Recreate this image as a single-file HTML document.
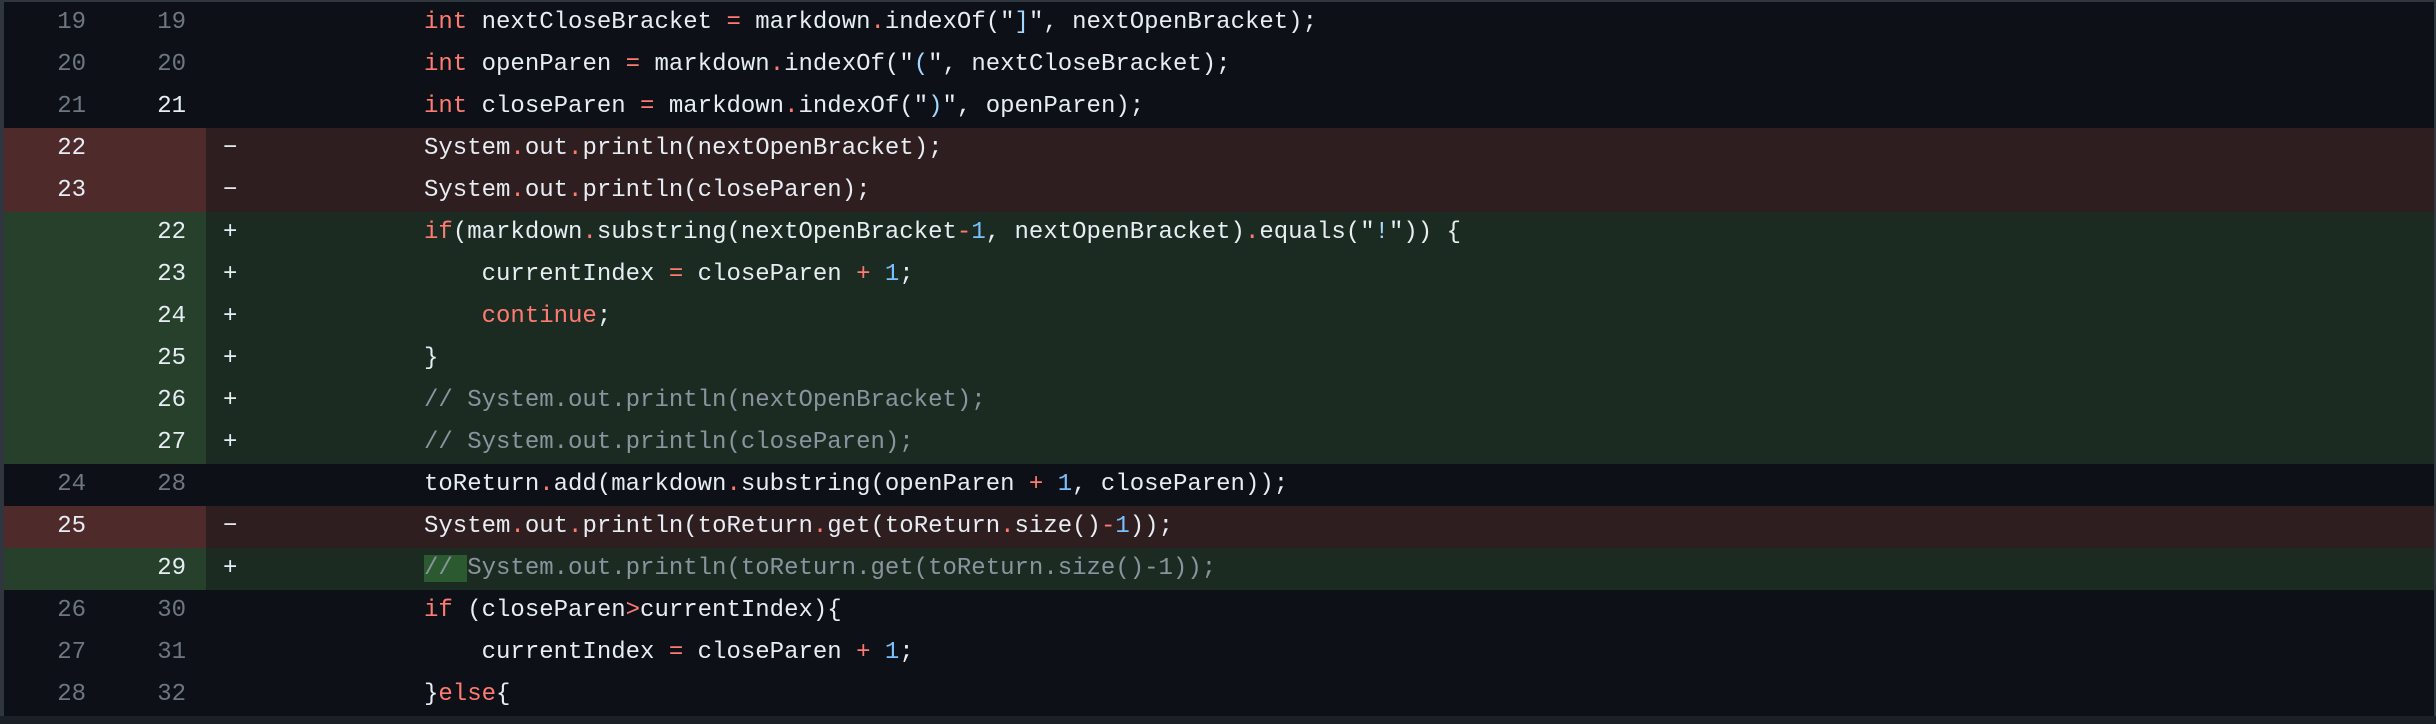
<!DOCTYPE html>
<html><head><meta charset="utf-8"><style>
html,body{margin:0;padding:0;background:#0d1117;width:2436px;height:724px;overflow:hidden}
#wrap{position:absolute;left:0;top:0;width:2436px;height:724px;background:#0d1117}
.bl{position:absolute;left:0;top:0;width:4px;height:716px;background:#30363d}
.br{position:absolute;right:0;top:0;width:2px;height:716px;background:#30363d}
.bt{position:absolute;left:0;top:0;width:2436px;height:2px;background:#30363d}
.bb{position:absolute;left:0;top:716px;width:2436px;height:8px;background:#1b1f26}
.row{position:absolute;left:4px;width:2430px;height:42px;font-family:"Liberation Mono",monospace;font-size:24px;line-height:42px;color:#e6edf3;white-space:pre}
.n1,.n2{position:absolute;top:0;height:42px;text-align:right;color:#6e7681;box-sizing:border-box;padding-right:0}
.n1{left:0;width:82px}
.n2{left:101px;width:81px}
.nb{position:absolute;left:0;top:0;width:202px;height:42px}
.sg{position:absolute;left:219px;top:0}
.cd{position:absolute;left:420px;top:0}
.del{background:#2f1e20}.del .nb{background:#4f2a2b}
.add{background:#1b2b22}.add .nb{background:#27402c}
.del .n1,.del .n2,.add .n1,.add .n2{color:#e6edf3}
.hl .n2{color:#e6edf3}
.k{color:#ff7b72}.o{color:#ff7b72}.c{color:#8b949e}.m{color:#79c0ff}.s{color:#a5d6ff}
.hi{background:#2b5a30;color:#8b949e}
</style></head><body><div id="wrap">
<div class="bt"></div>
<div class="row" style="top:2px"><div class="nb"></div><span class="n1">19</span><span class="n2">19</span><span class="cd"><span class="k">int</span> nextCloseBracket <span class="o">=</span> markdown<span class="o">.</span>indexOf("<span class="s">]</span>", nextOpenBracket);</span></div>
<div class="row" style="top:44px"><div class="nb"></div><span class="n1">20</span><span class="n2">20</span><span class="cd"><span class="k">int</span> openParen <span class="o">=</span> markdown<span class="o">.</span>indexOf("<span class="s">(</span>", nextCloseBracket);</span></div>
<div class="row hl" style="top:86px"><div class="nb"></div><span class="n1">21</span><span class="n2">21</span><span class="cd"><span class="k">int</span> closeParen <span class="o">=</span> markdown<span class="o">.</span>indexOf("<span class="s">)</span>", openParen);</span></div>
<div class="row del" style="top:128px"><div class="nb"></div><span class="n1">22</span><span class="n2"></span><span class="sg">−</span><span class="cd">System<span class="o">.</span>out<span class="o">.</span>println(nextOpenBracket);</span></div>
<div class="row del" style="top:170px"><div class="nb"></div><span class="n1">23</span><span class="n2"></span><span class="sg">−</span><span class="cd">System<span class="o">.</span>out<span class="o">.</span>println(closeParen);</span></div>
<div class="row add" style="top:212px"><div class="nb"></div><span class="n1"></span><span class="n2">22</span><span class="sg">+</span><span class="cd"><span class="k">if</span>(markdown<span class="o">.</span>substring(nextOpenBracket<span class="o">-</span><span class="m">1</span>, nextOpenBracket)<span class="o">.</span>equals("<span class="s">!</span>")) {</span></div>
<div class="row add" style="top:254px"><div class="nb"></div><span class="n1"></span><span class="n2">23</span><span class="sg">+</span><span class="cd">    currentIndex <span class="o">=</span> closeParen <span class="o">+</span> <span class="m">1</span>;</span></div>
<div class="row add" style="top:296px"><div class="nb"></div><span class="n1"></span><span class="n2">24</span><span class="sg">+</span><span class="cd">    <span class="k">continue</span>;</span></div>
<div class="row add" style="top:338px"><div class="nb"></div><span class="n1"></span><span class="n2">25</span><span class="sg">+</span><span class="cd">}</span></div>
<div class="row add" style="top:380px"><div class="nb"></div><span class="n1"></span><span class="n2">26</span><span class="sg">+</span><span class="cd"><span class="c">// System.out.println(nextOpenBracket);</span></span></div>
<div class="row add" style="top:422px"><div class="nb"></div><span class="n1"></span><span class="n2">27</span><span class="sg">+</span><span class="cd"><span class="c">// System.out.println(closeParen);</span></span></div>
<div class="row" style="top:464px"><div class="nb"></div><span class="n1">24</span><span class="n2">28</span><span class="cd">toReturn<span class="o">.</span>add(markdown<span class="o">.</span>substring(openParen <span class="o">+</span> <span class="m">1</span>, closeParen));</span></div>
<div class="row del" style="top:506px"><div class="nb"></div><span class="n1">25</span><span class="n2"></span><span class="sg">−</span><span class="cd">System<span class="o">.</span>out<span class="o">.</span>println(toReturn<span class="o">.</span>get(toReturn<span class="o">.</span>size()<span class="o">-</span><span class="m">1</span>));</span></div>
<div class="row add" style="top:548px"><div class="nb"></div><span class="n1"></span><span class="n2">29</span><span class="sg">+</span><span class="cd"><span class="hi">// </span><span class="c">System.out.println(toReturn.get(toReturn.size()-1));</span></span></div>
<div class="row" style="top:590px"><div class="nb"></div><span class="n1">26</span><span class="n2">30</span><span class="cd"><span class="k">if</span> (closeParen<span class="o">&gt;</span>currentIndex){</span></div>
<div class="row" style="top:632px"><div class="nb"></div><span class="n1">27</span><span class="n2">31</span><span class="cd">    currentIndex <span class="o">=</span> closeParen <span class="o">+</span> <span class="m">1</span>;</span></div>
<div class="row" style="top:674px"><div class="nb"></div><span class="n1">28</span><span class="n2">32</span><span class="cd">}<span class="k">else</span>{</span></div>
<div class="bl"></div><div class="br"></div><div class="bb"></div>
</div></body></html>
